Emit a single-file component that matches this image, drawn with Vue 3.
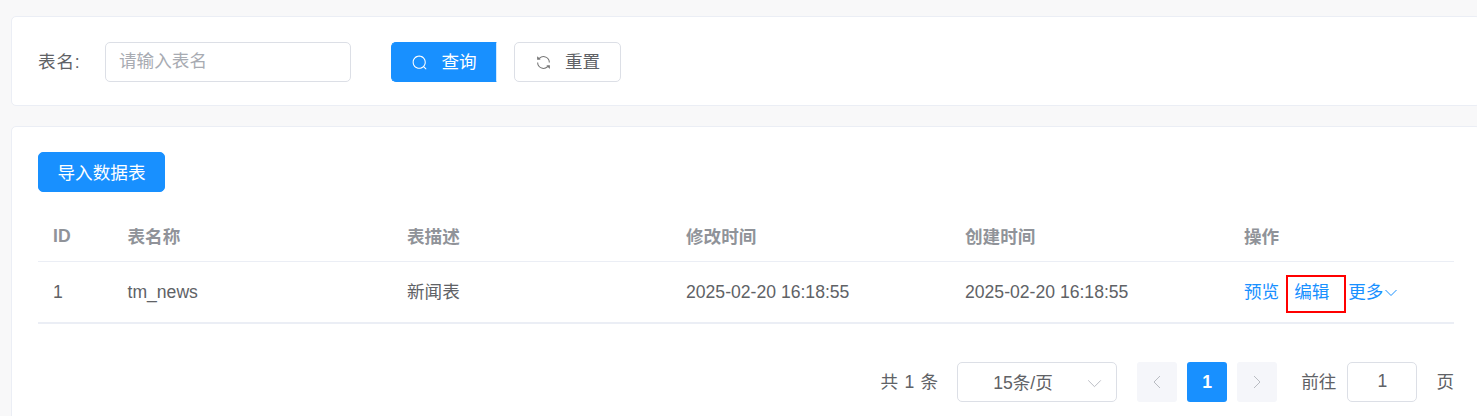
<template>
  <div class="page">
    <section class="card search-card">
      <label class="field-label">表名:</label>
      <div class="text-input">
        <input type="text" placeholder="请输入表名" />
      </div>
      <button class="btn btn-primary btn-query">
        <svg class="btn-icon" viewBox="0 0 1024 1024" fill="currentColor">
          <path d="M795.9 750.7l124.2 124.2c12.5 12.5 12.5 32.8 0 45.3s-32.8 12.5-45.3 0L750.7 795.9c-71.9 60.5-162.7 93.7-256.7 93.7-218.7 0-396-177.3-396-396S275.300 97.600 494 97.600s396 177.300 396 396c0 94-33.200 184.800-94.100 257.100zM494 825.600c183.400 0 332-148.600 332-332s-148.600-332-332-332-332 148.600-332 332 148.600 332 332 332z" />
        </svg>
        <span class="raise">查询</span>
      </button>
      <button class="btn btn-reset">
        <svg class="btn-icon" viewBox="0 0 1024 1024" fill="currentColor">
          <path d="M771.800 794.100A384 384 0 0 1 128 512h64a320 320 0 0 0 555.700 216.700L672 672h224v224l-68-68zM252.200 229.900A384 384 0 0 1 896 512h-64a320 320 0 0 0-555.700-216.700L352 352H128V128l68 68z" />
        </svg>
        <span class="raise">重置</span>
      </button>
    </section>

    <section class="card table-card">
      <button class="btn btn-primary btn-import"><span class="raise-sm">导入数据表</span></button>

      <table class="data-table">
        <colgroup>
          <col v-for="w in colWidths" :key="w.key" :style="{ width: w.width + 'px' }" />
        </colgroup>
        <thead>
          <tr>
            <th>ID</th>
            <th><span class="raise-sm">表名称</span></th>
            <th><span class="raise-sm">表描述</span></th>
            <th><span class="raise-sm">修改时间</span></th>
            <th><span class="raise-sm">创建时间</span></th>
            <th><span class="raise-sm">操作</span></th>
          </tr>
        </thead>
        <tbody>
          <tr v-for="row in rows" :key="row.id">
            <td>{{ row.id }}</td>
            <td>{{ row.name }}</td>
            <td><span class="raise">{{ row.desc }}</span></td>
            <td>{{ row.updated }}</td>
            <td>{{ row.created }}</td>
            <td>
              <div class="actions">
                <a class="link"><span class="raise">预览</span></a>
                <a class="link link-marked"><span class="raise">编辑</span></a>
                <a class="link link-more">
                  <span class="raise">更多</span>
                  <svg class="more-icon" viewBox="0 0 12 8" fill="none" stroke="currentColor" stroke-width="1">
                    <path d="M0.500 1l5.500 5.500L11.500 1" />
                  </svg>
                </a>
              </div>
            </td>
          </tr>
        </tbody>
      </table>

      <div class="pager">
        <span class="pager-total raise">共 1 条</span>
        <div class="pager-size">
          <span class="raise-sm">15条/页</span>
          <svg class="size-arrow" viewBox="0 0 16 10" fill="none" stroke="currentColor" stroke-width="1">
            <path d="M1 1.500l7 7 7-7" />
          </svg>
        </div>
        <button class="page-btn page-arrow">
          <svg viewBox="0 0 8 14" fill="none" stroke="currentColor" stroke-width="1">
            <path d="M7 1L1 7l6 6" />
          </svg>
        </button>
        <button class="page-btn page-current">1</button>
        <button class="page-btn page-arrow">
          <svg viewBox="0 0 8 14" fill="none" stroke="currentColor" stroke-width="1">
            <path d="M1 1l6 6-6 6" />
          </svg>
        </button>
        <span class="pager-goto raise">前往</span>
        <div class="pager-input"><span class="raise-sm">1</span></div>
        <span class="pager-unit raise">页</span>
      </div>
    </section>
  </div>
</template>

<script setup>
const colWidths = [
  { key: 'id', width: 74.5 },
  { key: 'name', width: 279.5 },
  { key: 'desc', width: 279 },
  { key: 'updated', width: 279 },
  { key: 'created', width: 279 },
  { key: 'ops', width: 225 },
];

const rows = [
  {
    id: 1,
    name: 'tm_news',
    desc: '新闻表',
    updated: '2025-02-20 16:18:55',
    created: '2025-02-20 16:18:55',
  },
];
</script>

<style>
html,
body {
  margin: 0;
  background: #f8f8f9;
}
</style>

<style scoped>
.page {
  box-sizing: border-box;
  width: 1477px;
  height: 416px;
  overflow: hidden;
  padding: 16px 0 0 11px;
  font-family: "Liberation Sans", "Noto Sans CJK SC", sans-serif;
  font-size: 17.6px;
  color: #606266;
}

.raise {
  display: inline-block;
  padding-bottom: 4px;
}

.raise-sm {
  display: inline-block;
  padding-bottom: 2px;
}

.card {
  box-sizing: border-box;
  width: 1470px;
  background: #fff;
  border: 1px solid #ebeef5;
  border-radius: 5px;
}

.search-card {
  display: flex;
  align-items: center;
  height: 90px;
  padding: 2px 26px 0;
}

.field-label {
  width: 67px;
  flex: none;
  letter-spacing: 0.8px;
  padding-bottom: 4px;
}

.text-input {
  box-sizing: border-box;
  width: 246px;
  height: 40px;
  border: 1px solid #dcdfe6;
  border-radius: 5px;
  display: flex;
  align-items: center;
  padding: 0 13px;
}

.text-input input {
  width: 100%;
  border: 0;
  outline: 0;
  padding: 0 0 2px;
  font: inherit;
  color: inherit;
}

.text-input input::placeholder {
  color: #a8abb2;
  opacity: 1;
}

.btn {
  box-sizing: border-box;
  height: 40px;
  display: inline-flex;
  align-items: center;
  justify-content: center;
  border: 1px solid #dcdfe6;
  border-radius: 5px;
  background: #fff;
  color: #606266;
  font: inherit;
  padding: 0;
}

.btn-primary {
  background: #1890ff;
  border-color: #1890ff;
  color: #fff;
}

.btn-icon {
  width: 17px;
  height: 17px;
  margin-right: 13px;
}

.btn-query {
  width: 106px;
  margin-left: 40px;
  border-radius: 5px 0 0 5px;
  border-right-color: #d1e9ff;
}

.btn-reset {
  width: 107px;
  margin-left: 17px;
}

.btn-reset .btn-icon {
  color: #777;
}

.table-card {
  margin-top: 20px;
  height: 320px;
  padding: 25px 26px 0;
}

.btn-import {
  width: 127px;
  display: flex;
}

.data-table {
  table-layout: fixed;
  border-collapse: collapse;
  width: 1416px;
  margin-top: 20px;
}

.data-table th,
.data-table td {
  padding: 0 15px;
  text-align: left;
  white-space: nowrap;
}

.data-table th {
  height: 49px;
  color: #909399;
  font-weight: 700;
  border-bottom: 1px solid #ebeef5;
}

.data-table td {
  height: 60px;
  border-bottom: 2px solid #ebeef5;
}

.actions {
  display: flex;
  align-items: center;
}

.link {
  color: #1890ff;
  display: inline-flex;
  align-items: center;
}

.link-marked {
  box-sizing: border-box;
  width: 60px;
  height: 38px;
  margin: 4px 2px 0 7px;
  padding: 0 0 4px 6px;
  border: 2px solid #f00;
}

.more-icon {
  width: 12px;
  height: 8px;
  margin-left: 2px;
  margin-top: 2px;
}

.pager {
  display: flex;
  align-items: center;
  justify-content: flex-end;
  margin-top: 38px;
}

.pager-total {
  margin-right: 19px;
  word-spacing: 1.5px;
}

.pager-size {
  box-sizing: border-box;
  width: 160px;
  height: 40px;
  border: 1px solid #dcdfe6;
  border-radius: 5px;
  display: flex;
  align-items: center;
  padding-left: 35px;
  position: relative;
}

.size-arrow {
  position: absolute;
  right: 14px;
  top: 16px;
  width: 15px;
  height: 9px;
  color: #b4b7be;
}

.page-btn {
  box-sizing: border-box;
  width: 40px;
  height: 40px;
  margin-left: 10px;
  border: 0;
  border-radius: 3px;
  padding: 0;
  font: inherit;
  display: flex;
  align-items: center;
  justify-content: center;
}

.page-arrow {
  background: #f5f6fa;
  color: #b9bcc2;
}

.page-arrow svg {
  width: 8px;
  height: 14px;
}

.pager-size + .page-arrow {
  margin-left: 20px;
}

.page-current {
  background: #1890ff;
  color: #fff;
  font-weight: 700;
}

.pager-goto {
  margin-left: 24px;
  margin-right: 11px;
}

.pager-input {
  box-sizing: border-box;
  width: 70px;
  height: 40px;
  border: 1px solid #dcdfe6;
  border-radius: 5px;
  display: flex;
  align-items: center;
  justify-content: center;
}

.pager-unit {
  margin-left: 19px;
}
</style>
